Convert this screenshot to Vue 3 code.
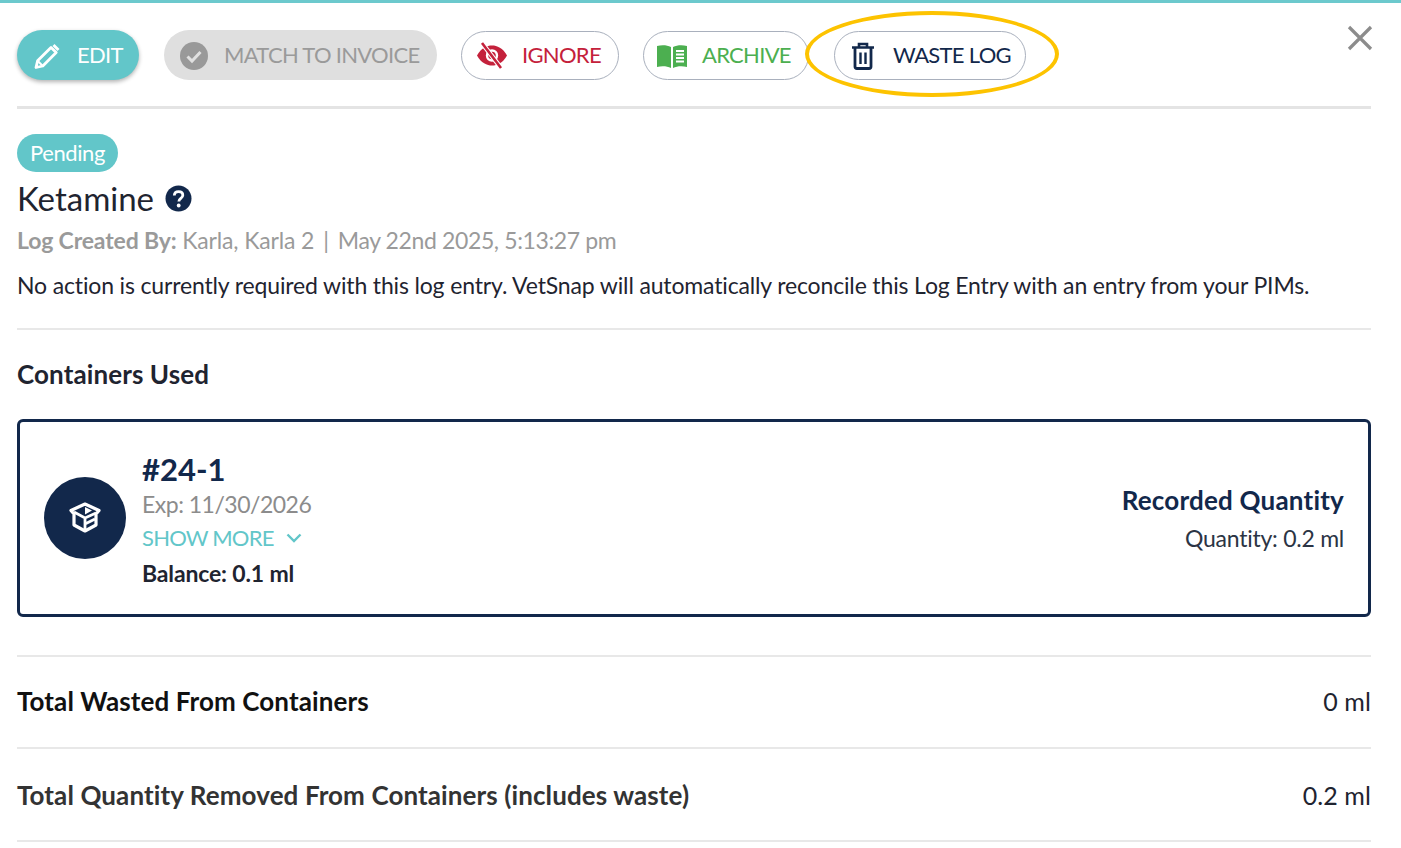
<template>
  <div class="panel">
    <div class="toolbar">
      <button class="btn btn-edit">
        <svg width="30" height="30" viewBox="0 0 30 30"><path d="M4 26.500l1.600-6.700L19 6.400l5.200 5.200L10.800 25z" fill="none" stroke="#fff" stroke-width="2.800" stroke-linejoin="round"/><path d="M20.500 5l2-2 5 5-2 2z" fill="#fff"/><path d="M5.600 19.800l5.200 5.200" stroke="#fff" stroke-width="2"/></svg>
        <span>EDIT</span>
      </button>
      <button class="btn btn-match">
        <svg width="28" height="28" viewBox="0 0 28 28"><circle cx="14" cy="14" r="14" fill="#999"/><path d="M7.500 14.500l4.500 4.500 8.500-9" fill="none" stroke="#e0e0e0" stroke-width="3"/></svg>
        <span>MATCH TO INVOICE</span>
      </button>
      <button class="btn btn-line btn-ignore">
        <svg width="32" height="28" viewBox="0 0 32 28"><path d="M1 13.500C5 6 11 3.500 16 3.500S27 6 31 13.500C27 21 21 23.500 16 23.500S5 21 1 13.500z" fill="#c4213b"/><circle cx="16" cy="13.500" r="5" fill="none" stroke="#fff" stroke-width="2.400"/><path d="M6 1l19 25" stroke="#fff" stroke-width="4.600"/><path d="M6 1l19 25" stroke="#c4213b" stroke-width="2.600"/></svg>
        <span>IGNORE</span>
      </button>
      <button class="btn btn-line btn-archive">
        <svg width="32" height="26" viewBox="0 0 32 26"><path d="M1 3c5-1.500 10-1 14 1v21c-4-2-9-2.500-14-1z" fill="#4caf50"/><path d="M17 4c4-2 9-2.500 14-1v21c-5-1.500-10-1-14 1z" fill="#4caf50"/><path d="M20 8h8M20 11.500h8M20 15h8M20 18.500h8" stroke="#fff" stroke-width="1.800"/></svg>
        <span>ARCHIVE</span>
      </button>
      <button class="btn btn-line btn-waste">
        <svg width="24" height="28" viewBox="0 0 24 28"><path d="M1 5.500h22M8 5V2h8v3" fill="none" stroke="#12284b" stroke-width="2.600"/><path d="M4 6v18.500a2 2 0 0 0 2 2h12a2 2 0 0 0 2-2V6" fill="none" stroke="#12284b" stroke-width="2.800"/><path d="M9.500 10.500v11.500M14.500 10.500v11.500" stroke="#12284b" stroke-width="2.400"/></svg>
        <span>WASTE LOG</span>
        <i class="highlight"></i>
      </button>
      <svg class="close" width="26" height="26" viewBox="0 0 26 26"><path d="M2 2l22 22M24 2L2 24" stroke="#8c8c8c" stroke-width="3.200"/></svg>
    </div>

    <section class="summary">
      <span class="status">Pending</span>
      <h1 class="title">
        Ketamine
        <svg width="27" height="27" viewBox="0 0 27 27"><circle cx="13.500" cy="13.500" r="13" fill="#12284b"/><path d="M9.300 10.500c.1-2.500 1.900-3.800 4.300-3.800s4.200 1.300 4.200 3.500c0 3.300-4 3-4 6.300" fill="none" stroke="#fff" stroke-width="2.800"/><circle cx="13.700" cy="20.500" r="1.900" fill="#fff"/></svg>
      </h1>
      <p class="meta"><b>Log Created By:</b> {{ log.author }}<span class="sep">|</span><span class="date">{{ log.created }}</span></p>
      <p class="note">{{ log.note }}</p>
    </section>

    <section class="containers">
      <h2 class="section-title">Containers Used</h2>
      <div class="card">
        <div class="avatar">
          <svg width="36" height="36" viewBox="0 0 36 36"><path d="M18 4l14 6.500-3 3.500v11l-11 6-11-6V14l-3-3.500z" fill="none" stroke="#fff" stroke-width="3.200" stroke-linejoin="round"/><path d="M7 12l11 6 11-5M18 18v13M18 24l10-5" fill="none" stroke="#fff" stroke-width="2.800"/><path d="M18 7l7 3.500-7 4z" fill="#fff"/></svg>
        </div>
        <div class="info">
          <div class="lot">#24-1</div>
          <div class="exp">Exp: 11/30/2026</div>
          <div class="more">SHOW MORE
            <svg width="16" height="10" viewBox="0 0 16 10"><path d="M1.500 1.500L8 8l6.500-6.500" fill="none" stroke="#62c6c9" stroke-width="2.400"/></svg>
          </div>
          <div class="balance">Balance: 0.1 ml</div>
        </div>
        <div class="quantity">
          <div class="quantity-label">Recorded Quantity</div>
          <div class="quantity-value">Quantity: 0.2 ml</div>
        </div>
      </div>
    </section>

    <div v-for="row in totals" :key="row.label" class="total">
      <b>{{ row.label }}</b>
      <span>{{ row.value }}</span>
    </div>
  </div>
</template>

<script setup>
const log = {
  author: 'Karla, Karla 2',
  created: 'May 22nd 2025, 5:13:27 pm',
  note: 'No action is currently required with this log entry. VetSnap will automatically reconcile this Log Entry with an entry from your PIMs.'
}

const totals = [
  { label: 'Total Wasted From Containers', value: '0 ml' },
  { label: 'Total Quantity Removed From Containers (includes waste)', value: '0.2 ml' }
]
</script>

<style>
html, body {
  background: #fff;
  overflow: hidden;
}
</style>

<style scoped>
.panel {
  height: 848px;
  box-sizing: border-box;
  border-top: 3px solid #6cc9cd;
  padding: 0 30px 0 17px;
  font-family: Lato, sans-serif;
  font-size: 23px;
  letter-spacing: -0.15px;
  color: #1f2430;
  overflow: hidden;
}

svg {
  flex: none;
}

.toolbar {
  position: relative;
  display: flex;
  align-items: center;
  height: 106px;
  padding-top: 1px;
  box-sizing: border-box;
  border-bottom: 3px solid #e4e4e4;
}

.btn {
  display: flex;
  align-items: center;
  flex: none;
  height: 50px;
  box-sizing: border-box;
  padding-bottom: 2px;
  border: 0;
  border-radius: 25px;
  background: none;
  font: inherit;
  font-size: 22px;
  letter-spacing: -0.7px;
  white-space: nowrap;
}

.btn svg {
  margin-top: 2px;
}

.btn-edit {
  width: 122px;
  padding-left: 15px;
  gap: 15px;
  background: #62c6c9;
  color: #fff;
  box-shadow: 0 2px 4px rgba(0, 0, 0, 0.3);
}

.btn-match {
  width: 273px;
  margin-left: 25px;
  padding-left: 16px;
  gap: 16px;
  background: #dfdfdf;
  color: #9a9a9a;
}

.btn-line {
  height: 49px;
  border: 1.500px solid #a9b0bd;
  background: #fff;
}

.btn-ignore {
  width: 158px;
  margin-left: 24px;
  padding-left: 14px;
  gap: 14px;
  color: #c4213b;
}

.btn-archive {
  width: 166px;
  margin-left: 24px;
  padding-left: 12px;
  gap: 14px;
  color: #4caf50;
}

.btn-waste {
  position: relative;
  width: 192px;
  margin-left: 25px;
  padding-left: 16px;
  gap: 18px;
  color: #12284b;
}

.highlight {
  position: absolute;
  left: -30px;
  top: -21px;
  width: 254px;
  height: 86px;
  box-sizing: border-box;
  border: 4px solid #fdc300;
  border-radius: 50%;
}

.close {
  position: absolute;
  right: -2px;
  top: 22px;
}

.summary {
  padding: 25px 0 29px;
  border-bottom: 2px solid #e8e8e8;
}

.status {
  display: inline-block;
  padding: 0 13px;
  height: 38px;
  line-height: 38px;
  border-radius: 19px;
  background: #62c6c9;
  color: #fff;
  font-size: 22px;
  letter-spacing: -0.4px;
}

.title {
  display: flex;
  align-items: center;
  gap: 11px;
  margin: 1px 0 0;
  font-size: 33px;
  line-height: 50px;
  font-weight: 400;
  letter-spacing: 0;
}

.meta {
  margin: 3px 0 0;
  color: #9a9a9a;
}

.sep {
  margin: 0 9px;
}

.date {
  letter-spacing: -0.38px;
}

.note {
  margin: 17px 0 0;
}

.section-title {
  margin: 27px 0 28px;
  font-size: 26px;
  line-height: 34px;
  font-weight: 700;
  letter-spacing: 0.1px;
}

.card {
  display: flex;
  align-items: center;
  height: 198px;
  box-sizing: border-box;
  padding: 0 24px;
  border: 3px solid #12284b;
  border-radius: 6px;
}

.avatar {
  display: flex;
  align-items: center;
  justify-content: center;
  flex: none;
  width: 82px;
  height: 82px;
  border-radius: 50%;
  background: #12284b;
}

.info {
  flex: 1;
  margin-left: 16px;
  padding-top: 4px;
}

.lot {
  font-size: 31px;
  font-weight: 700;
  line-height: 37px;
  letter-spacing: 0;
  color: #12284b;
}

.exp {
  line-height: 32px;
  letter-spacing: -0.5px;
  color: #8c8c8c;
}

.more {
  display: flex;
  align-items: center;
  gap: 12px;
  font-size: 22px;
  letter-spacing: -0.8px;
  line-height: 36px;
  color: #62c6c9;
}

.balance {
  line-height: 34px;
  font-weight: 700;
}

.quantity {
  text-align: right;
}

.quantity-label {
  font-size: 26px;
  font-weight: 700;
  line-height: 40px;
  letter-spacing: 0.2px;
  color: #12284b;
}

.quantity-value {
  margin-top: -1px;
  line-height: 38px;
  letter-spacing: -0.25px;
  color: #2b3444;
}

.containers {
  padding-bottom: 38px;
  border-bottom: 2px solid #e8e8e8;
}

.total {
  display: flex;
  justify-content: space-between;
  align-items: center;
  height: 92px;
  box-sizing: border-box;
  padding-bottom: 2px;
  border-bottom: 2px solid #e8e8e8;
  font-size: 26px;
  letter-spacing: 0.1px;
  color: #111;
}

.total:last-child {
  height: 93px;
  padding-bottom: 0;
  color: #333;
}

.total span {
  font-size: 25px;
  color: #1f2430;
}
</style>
